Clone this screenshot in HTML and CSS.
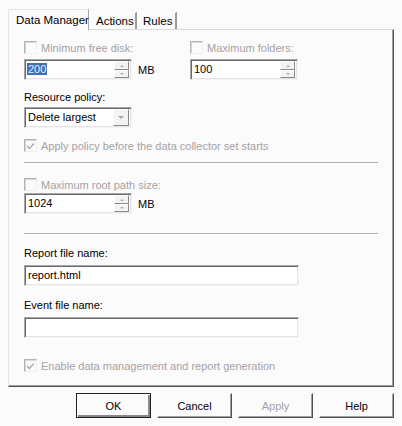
FILE: index.html
```html
<!DOCTYPE html>
<html>
<head>
<meta charset="utf-8">
<link rel="stylesheet" href="styles.css">
</head>
<body>
<div class="dialog">
  <div class="tabs">
    <div class="tab active">Data Manager</div>
    <div class="tab">Actions</div>
    <div class="tab">Rules</div>
  </div>
  <div class="panel">
    <div class="pair">
      <div class="col first">
        <div class="check disabled"><span class="box"></span><span>Minimum free disk:</span></div>
        <div class="spinrow">
          <div class="field spin"><span class="val"><span class="sel">200</span></span><span class="arrows"><span class="up"></span><span class="down"></span></span></div>
          <span class="unit">MB</span>
        </div>
      </div>
      <div class="col">
        <div class="check disabled"><span class="box"></span><span>Maximum folders:</span></div>
        <div class="spinrow">
          <div class="field spin"><span class="val">100</span><span class="arrows"><span class="up"></span><span class="down"></span></span></div>
        </div>
      </div>
    </div>
    <div class="label policy-label">Resource policy:</div>
    <div class="field select"><span class="val">Delete largest</span><span class="drop"></span></div>
    <div class="check disabled checked apply"><span class="box"><svg width="9" height="9" viewBox="0 0 9 9"><path d="M1 4 L3.5 6.5 L8 1.5 L8 3.5 L3.5 8.5 L1 6 Z" fill="#a9a9a9"/></svg></span><span>Apply policy before the data collector set starts</span></div>
    <div class="sep sep1"></div>
    <div class="check disabled root"><span class="box"></span><span>Maximum root path size:</span></div>
    <div class="spinrow root-spin">
      <div class="field spin"><span class="val">1024</span><span class="arrows"><span class="up"></span><span class="down"></span></span></div>
      <span class="unit">MB</span>
    </div>
    <div class="sep sep2"></div>
    <div class="label report-label">Report file name:</div>
    <div class="field text"><span class="val">report.html</span></div>
    <div class="label event-label">Event file name:</div>
    <div class="field text"><span class="val"></span></div>
    <div class="check disabled checked enable"><span class="box"><svg width="9" height="9" viewBox="0 0 9 9"><path d="M1 4 L3.5 6.5 L8 1.5 L8 3.5 L3.5 8.5 L1 6 Z" fill="#a9a9a9"/></svg></span><span>Enable data management and report generation</span></div>
  </div>
  <div class="buttons">
    <div class="btn default">OK</div>
    <div class="btn">Cancel</div>
    <div class="btn disabled">Apply</div>
    <div class="btn">Help</div>
  </div>
</div>
</body>
</html>
```

FILE: styles.css
```css
html, body {
  margin: 0;
  padding: 0;
  background: #fcfbfc;
}
body {
  font-family: "Liberation Sans", Arial, sans-serif;
  font-size: 11px;
  color: #000;
}
.dialog {
  padding: 9px 8px 0 8px;
  width: 386px;
}
.tabs {
  display: flex;
  align-items: flex-end;
  height: 20px;
  position: relative;
  z-index: 2;
}
.tab {
  height: 17px;
  line-height: 17px;
  padding: 0 6px;
  border-top: 1px solid #fff;
  border-left: 1px solid #fff;
  border-right: 2px solid #9c9a9c;
  box-sizing: border-box;
  font-size: 11.5px;
  white-space: nowrap;
}
.tab.active {
  height: 21px;
  line-height: 20px;
  margin-bottom: -1px;
  width: 81px;
  padding-left: 7px;
  background: #fcfbfc;
  border-top: 1px solid #e4e2e4;
  border-left: 1px solid #e4e2e4;
  border-right: 1px solid #a8a6a8;
}
.tab:nth-child(2) { width: 48px; padding-left: 6px; }
.tab:nth-child(3) { width: 40px; padding-left: 5px; }
.panel {
  height: 358px;
  box-sizing: border-box;
  border-top: 1px solid #dcdadc;
  border-left: 1px solid #e4e2e4;
  border-right: 1px solid #505050;
  border-bottom: 1px solid #505050;
  box-shadow: inset -1px -1px 0 #a0a0a0;
  padding: 11px 15px 0 15px;
  display: flex;
  flex-direction: column;
  align-items: flex-start;
}
.pair {
  display: flex;
}
.col {
  display: flex;
  flex-direction: column;
}
.col.first { width: 166px; }
.check {
  display: flex;
  align-items: center;
  height: 13px;
  gap: 4px;
}
.check.disabled { color: #a4a2a4; }
.box {
  width: 13px;
  height: 13px;
  box-sizing: border-box;
  border-top: 1px solid #b4b2b4;
  border-left: 1px solid #b4b2b4;
  border-right: 1px solid #f0eef0;
  border-bottom: 1px solid #f0eef0;
  box-shadow: inset 1px 1px 0 #d8d6d8;
  display: flex;
  align-items: center;
  justify-content: center;
  background: #fcfbfc;
}
.box svg { display: block; }
.spinrow {
  display: flex;
  align-items: center;
  gap: 6px;
  margin-top: 5px;
}
.field {
  box-sizing: border-box;
  height: 21px;
  background: #fff;
  border-top: 1px solid #a8a6a8;
  border-left: 1px solid #a8a6a8;
  border-right: 1px solid #f4f2f4;
  border-bottom: 1px solid #f4f2f4;
  box-shadow: inset 1px 1px 0 #6a686a, inset -1px -1px 0 #e6e4e6;
  display: flex;
  align-items: center;
  position: relative;
}
.field .val {
  flex: 1;
  padding-left: 3px;
  line-height: 15px;
  font-size: 11px;
  white-space: nowrap;
}
.spin { width: 108px; }
.sel {
  background: #3f6fb6;
  color: #e8eef8;
  padding: 0 1px;
  margin-left: -1px;
}
.arrows {
  width: 15px;
  height: 17px;
  margin-right: 2px;
  display: flex;
  flex-direction: column;
}
.arrows span {
  flex: 1;
  box-sizing: border-box;
  border-top: 1px solid #fff;
  border-left: 1px solid #fff;
  border-right: 1px solid #8a888a;
  border-bottom: 1px solid #8a888a;
  background: #f4f2f4;
  position: relative;
}
.arrows .up::after, .arrows .down::after {
  content: "";
  position: absolute;
  left: 5px;
  top: 3px;
  border-left: 2px solid transparent;
  border-right: 2px solid transparent;
}
.arrows .up::after { border-bottom: 2px solid #b0aeb0; }
.arrows .down::after { border-top: 2px solid #b0aeb0; top: 2px; }
.unit { font-size: 11px; }
.label { height: 13px; line-height: 13px; font-size: 11px; }
.policy-label { margin-top: 11px; }
.select {
  width: 108px;
  height: 21px;
  margin-top: 3px;
  color: #000;
}
.drop {
  width: 16px;
  height: 17px;
  margin-right: 2px;
  box-sizing: border-box;
  border-top: 1px solid #fff;
  border-left: 1px solid #fff;
  border-right: 1px solid #8a888a;
  border-bottom: 1px solid #8a888a;
  background: #f4f2f4;
  position: relative;
}
.drop::after {
  content: "";
  position: absolute;
  left: 4px;
  top: 6px;
  border-left: 3px solid transparent;
  border-right: 3px solid transparent;
  border-top: 3px solid #a8a6a8;
}
.check span:last-child { font-size: 11px; white-space: nowrap; }
.apply { margin-top: 11px; }
.sep {
  align-self: stretch;
  height: 1px;
  background: #b0aeb0;
  border-bottom: 1px solid #fff;
}
.sep1 { margin-top: 10px; }
.root { margin-top: 14px; }
.root-spin { margin-top: 2px; }
.sep2 { margin-top: 19px; }
.report-label { margin-top: 12px; }
.text {
  width: 275px;
  margin-top: 5px;
}
.event-label { margin-top: 13px; }
.enable { margin-top: 21px; }
.buttons {
  display: flex;
  justify-content: flex-end;
  gap: 6px;
  margin-top: 6px;
}
.btn {
  width: 75px;
  height: 25px;
  box-sizing: border-box;
  border-top: 1px solid #fff;
  border-left: 1px solid #fff;
  border-right: 1px solid #505050;
  border-bottom: 1px solid #505050;
  box-shadow: inset -1px -1px 0 #a0a0a0;
  display: flex;
  align-items: center;
  justify-content: center;
  font-size: 11px;
  background: #fcfbfc;
}
.btn.default {
  border: 1px solid #202020;
  box-shadow: inset 1px 1px 0 #fff, inset -2px -2px 0 #8a888a;
}
.btn.disabled { color: #a4a2a4; }
```
